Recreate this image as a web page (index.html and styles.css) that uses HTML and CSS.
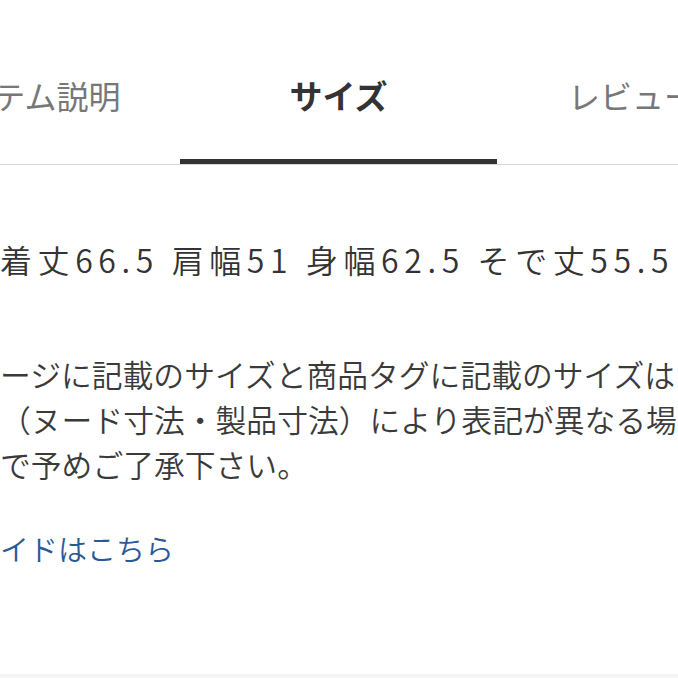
FILE: index.html
```html
<!DOCTYPE html>
<html lang="ja">
<head>
<meta charset="utf-8">
<link rel="stylesheet" href="styles.css">
</head>
<body>
<div class="page">
  <nav class="tabs">
    <div class="tab tab-first">アイテム説明</div>
    <div class="tab tab-active">サイズ</div>
    <div class="tab tab-last">レビュー</div>
  </nav>
  <section class="content">
    <p class="measure">着丈66.5 肩幅51 身幅62.5 そで丈55.5</p>
    <p class="note">ージに記載のサイズと商品タグに記載のサイズは<br>（ヌード寸法・製品寸法）により表記が異なる場<br>で予めご了承下さい。</p>
    <a class="guide" href="#">イドはこちら</a>
  </section>
  <div class="band"></div>
</div>
</body>
</html>
```
FILE: styles.css
```css
html, body {
  margin: 0;
  padding: 0;
  background: #ffffff;
}
body {
  font-family: "Noto Sans CJK JP", "Noto Sans", sans-serif;
  overflow: hidden;
  width: 678px;
  height: 678px;
}
.page {
  width: 678px;
  overflow: hidden;
}
.tabs {
  display: flex;
  margin-left: -137px;
  height: 165px;
  box-sizing: border-box;
  border-bottom: 1px solid #d6d6d6;
}
.tab {
  flex: 0 0 317px;
  box-sizing: border-box;
  height: 164px;
  padding-top: 73px;
  line-height: 44px;
  font-size: 32px;
  color: #777777;
  text-align: center;
  white-space: nowrap;
}
.tab-first {
  padding-left: 9px;
}
.tab-last {
  padding-right: 47px;
}
.tab-active {
  color: #333333;
  font-weight: 700;
  font-size: 33px;
  border-bottom: 5px solid #333333;
}
.content {
  display: flex;
  flex-direction: column;
  align-items: flex-start;
}
.measure {
  margin: 71px 0 0 0;
  font-size: 32px;
  font-weight: 350;
  line-height: 46px;
  letter-spacing: 5.6px;
  color: #333333;
  white-space: nowrap;
}
.note {
  margin: 69px 0 0 0;
  font-size: 30.8px;
  font-weight: 350;
  line-height: 45px;
  color: #3a3a3a;
  white-space: nowrap;
}
.guide {
  margin-top: 40px;
  font-size: 29px;
  font-weight: 350;
  line-height: 45px;
  color: #2a5a96;
  text-decoration: none;
  white-space: nowrap;
}
.band {
  margin-top: 103px;
  height: 10px;
  background: #f4f4f4;
}
```
